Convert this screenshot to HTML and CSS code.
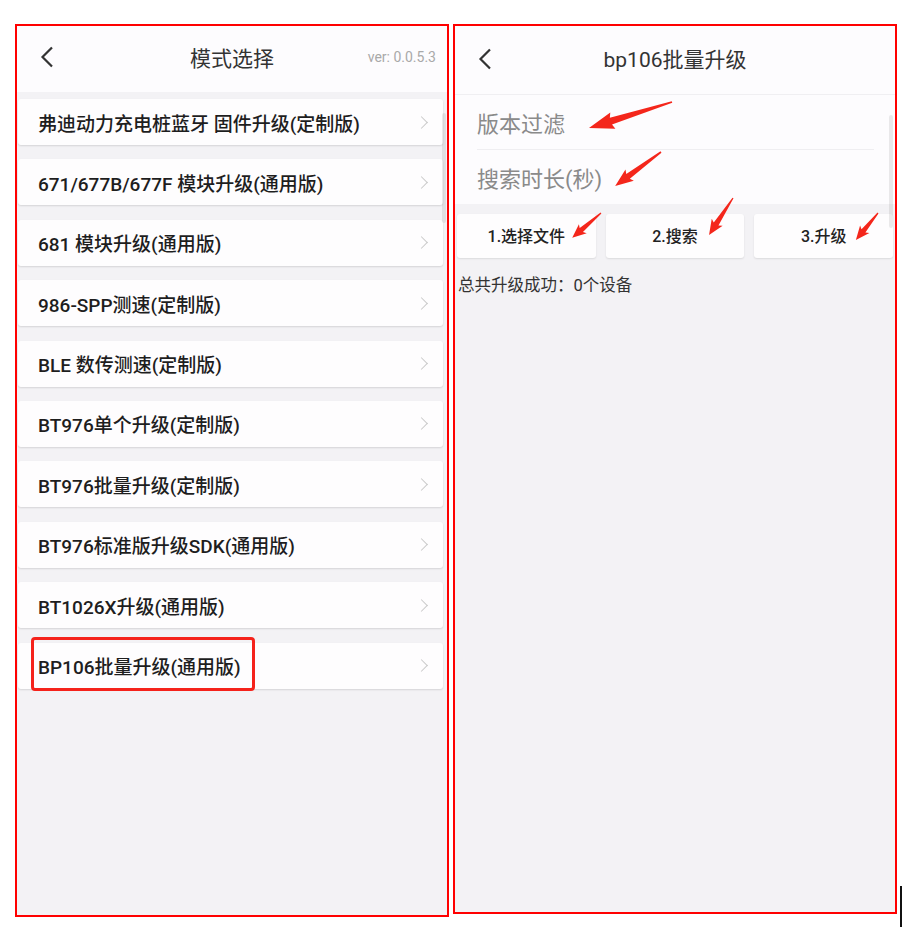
FILE: index.html
```html
<!DOCTYPE html>
<html lang="zh-CN">
<head>
    <meta charset="UTF-8">
    <meta name="viewport" content="width=device-width, initial-scale=1.0">
    <title>模式选择 / bp106批量升级</title>
    <link rel="stylesheet" href="styles.css">
</head>
<body>
    <div class="page">
        <!-- Left screen: mode list -->
        <div class="screen screen-left">
            <div class="topbar">
                <div class="topbar-side">
                    <svg class="back" width="14" height="22" viewBox="0 0 14 22"><path d="M12 1.5 L2.5 11 L12 20.5" fill="none" stroke="#333" stroke-width="2.2"/></svg>
                </div>
                <div class="topbar-title">模式选择</div>
                <div class="topbar-side version">ver: 0.0.5.3</div>
            </div>

            <div class="mode-list">
                <div class="mode-item"><span>弗迪动力充电桩蓝牙 固件升级(定制版)</span><i class="chevron"></i></div>
                <div class="mode-item"><span>671/677B/677F 模块升级(通用版)</span><i class="chevron"></i></div>
                <div class="mode-item"><span>681 模块升级(通用版)</span><i class="chevron"></i></div>
                <div class="mode-item"><span>986-SPP测速(定制版)</span><i class="chevron"></i></div>
                <div class="mode-item"><span>BLE 数传测速(定制版)</span><i class="chevron"></i></div>
                <div class="mode-item"><span>BT976单个升级(定制版)</span><i class="chevron"></i></div>
                <div class="mode-item"><span>BT976批量升级(定制版)</span><i class="chevron"></i></div>
                <div class="mode-item"><span>BT976标准版升级SDK(通用版)</span><i class="chevron"></i></div>
                <div class="mode-item"><span>BT1026X升级(通用版)</span><i class="chevron"></i></div>
                <div class="mode-item picked"><span>BP106批量升级(通用版)</span><i class="chevron"></i><b class="highlight"></b></div>
            </div>

            <div class="scroll-thumb"></div>
        </div>

        <!-- Right screen: bp106 batch upgrade -->
        <div class="screen screen-right">
            <div class="topbar topbar-tall">
                <div class="topbar-side">
                    <svg class="back" width="14" height="22" viewBox="0 0 14 22"><path d="M12 1.5 L2.5 11 L12 20.5" fill="none" stroke="#333" stroke-width="2.2"/></svg>
                </div>
                <div class="topbar-title">bp106批量升级</div>
                <div class="topbar-side"></div>
            </div>

            <div class="form">
                <div class="field">版本过滤</div>
                <div class="field">搜索时长(秒)</div>
            </div>

            <div class="actions">
                <div class="btn">1.选择文件</div>
                <div class="btn">2.搜索</div>
                <div class="btn">3.升级</div>
            </div>

            <div class="status">总共升级成功：0个设备</div>

            <div class="scroll-thumb scroll-thumb-right"></div>
        </div>

        <div class="caret"></div>
    </div>

    <!-- red annotation arrows drawn over the screenshot -->
    <svg class="marks" width="915" height="937" viewBox="0 0 915 937">
        <g fill="#f4261b">
            <polygon transform="translate(672 102) rotate(162.6)" points="0,-0.9 64,-3.6 62,-8.5 87,0 62,8.5 64,3.6 0,0.9"/>
            <polygon transform="translate(661 152) rotate(143.5)" points="0,-0.8 41,-3 39,-7 57,0 39,7 41,3 0,0.8"/>
            <polygon transform="translate(601 213) rotate(139.2)" points="0,-0.6 26,-2.5 24,-6 38,0 24,6 26,2.5 0,0.6"/>
            <polygon transform="translate(733 198) rotate(123)" points="0,-0.6 31,-2.8 29,-6.5 44,0 29,6.5 31,2.8 0,0.6"/>
            <polygon transform="translate(878 213) rotate(129.2)" points="0,-0.6 23,-2.5 21,-6 35,0 21,6 23,2.5 0,0.6"/>
        </g>
    </svg>
</body>
</html>
```

FILE: styles.css
```css
body {
    margin: 0;
    background-color: #ffffff;
    font-family: Roboto, "Noto Sans CJK SC", sans-serif;
    color: #222;
}

.page {
    display: flex;
    align-items: flex-start;
    gap: 4px;
    padding: 24px 0 0 15px;
}

.screen {
    position: relative;
    box-sizing: border-box;
    border: 2px solid #ff0000;
    background-color: #f3f2f5;
    display: flex;
    flex-direction: column;
}

.screen-left {
    width: 434px;
    height: 893px;
}

.screen-right {
    width: 444px;
    height: 890px;
}

/* Top bar */
.topbar {
    box-sizing: border-box;
    height: 66px;
    padding-bottom: 5px;
    background-color: #fdfcfe;
    display: grid;
    grid-template-columns: 1fr auto 1fr;
    align-items: center;
}

.topbar-tall {
    height: 69px;
    padding-bottom: 4px;
    border-bottom: 1px solid #f0eff2;
}

.topbar-side {
    display: flex;
    align-items: center;
}

.back {
    margin-left: 23px;
    margin-top: 1px;
}

.topbar-title {
    font-size: 21px;
    color: #333;
}

.version {
    justify-content: flex-end;
    padding-right: 11px;
    font-size: 14px;
    color: #a9a9a9;
}

/* Mode list */
.mode-list {
    display: flex;
    flex-direction: column;
    gap: 14.4px;
    padding: 7px 4px 0 1px;
}

.mode-item {
    position: relative;
    height: 46px;
    background-color: #fefdfe;
    border-radius: 3px;
    box-shadow: 0 1px 2px rgba(0, 0, 0, 0.13);
    display: flex;
    align-items: center;
    justify-content: space-between;
    padding: 0 14px 0 20px;
    font-size: 19px;
    font-weight: 500;
    color: #1e1e1e;
}

.chevron {
    width: 8px;
    height: 8px;
    border-top: 1.5px solid #c9c9c9;
    border-right: 1.5px solid #c9c9c9;
    transform: rotate(45deg);
    margin-right: 3px;
}

.highlight {
    position: absolute;
    left: 13px;
    top: -6px;
    width: 224px;
    height: 54px;
    box-sizing: border-box;
    border: 3px solid #f5221b;
    border-radius: 4px;
}

.scroll-thumb {
    position: absolute;
    top: 87px;
    right: 1px;
    width: 4px;
    height: 110px;
    border-radius: 2px;
    background-color: rgba(0, 0, 0, 0.08);
}

.scroll-thumb-right {
    top: 89px;
    right: 2px;
    height: 113px;
}

/* Right screen */
.form {
    background-color: #fdfcfe;
    padding: 0 21px 0 22px;
}

.field {
    height: 54px;
    display: flex;
    align-items: center;
    padding-bottom: 1px;
    box-sizing: border-box;
    font-size: 22px;
    color: #8a8a8a;
}

.field + .field {
    height: 55px;
    border-top: 1px solid #efeef1;
}

.actions {
    display: flex;
    gap: 10px;
    padding: 10px 2px 0 2px;
}

.btn {
    flex: 1;
    height: 44px;
    padding-bottom: 2px;
    box-sizing: border-box;
    background-color: #fefdfe;
    border-radius: 3px;
    box-shadow: 0 1px 2px rgba(0, 0, 0, 0.1);
    display: flex;
    align-items: center;
    justify-content: center;
    font-size: 16px;
    font-weight: 500;
    color: #222;
}

.status {
    margin-top: 14px;
    padding-left: 3px;
    font-size: 16.5px;
    color: #333;
}

.caret {
    width: 2px;
    height: 41px;
    margin: 862px 0 0 -1px;
    background-color: #111;
}

.marks {
    position: absolute;
    top: 0;
    left: 0;
    pointer-events: none;
}
```
